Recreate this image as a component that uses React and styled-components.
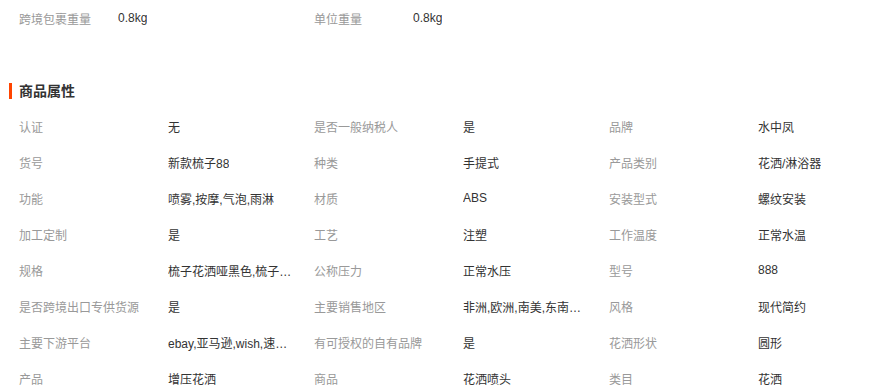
import React from "react";
import styled, { createGlobalStyle } from "styled-components";

const GlobalStyle = createGlobalStyle`
  body {
    margin: 0;
    background: #fff;
    font-family: "Liberation Sans", "Noto Sans CJK SC", sans-serif;
  }
`;

const weights = [
  { label: "跨境包裹重量", value: "0.8kg" },
  { label: "单位重量", value: "0.8kg" },
];

const attrs = [
  ["认证", "无"],
  ["是否一般纳税人", "是"],
  ["品牌", "水中凤"],
  ["货号", "新款梳子88"],
  ["种类", "手提式"],
  ["产品类别", "花洒/淋浴器"],
  ["功能", "喷雾,按摩,气泡,雨淋"],
  ["材质", "ABS"],
  ["安装型式", "螺纹安装"],
  ["加工定制", "是"],
  ["工艺", "注塑"],
  ["工作温度", "正常水温"],
  ["规格", "梳子花洒哑黑色,梳子花洒白色"],
  ["公称压力", "正常水压"],
  ["型号", "888"],
  ["是否跨境出口专供货源", "是"],
  ["主要销售地区", "非洲,欧洲,南美,东南亚,北美"],
  ["风格", "现代简约"],
  ["主要下游平台", "ebay,亚马逊,wish,速卖通"],
  ["有可授权的自有品牌", "是"],
  ["花洒形状", "圆形"],
  ["产品", "增压花洒"],
  ["商品", "花洒喷头"],
  ["类目", "花洒"],
];

const App = () => (
  <Page>
    <GlobalStyle />
    <TopRow>
      {weights.map(w => (
        <Cell key={w.label}>
          <Label narrow>{w.label}</Label>
          <Value>{w.value}</Value>
        </Cell>
      ))}
    </TopRow>
    <Title>商品属性</Title>
    <Grid>
      {attrs.map(([label, value]) => (
        <Cell key={label}>
          <Label>{label}</Label>
          <Value>{value}</Value>
        </Cell>
      ))}
    </Grid>
  </Page>
);

export default App;

const Page = styled.div`
  padding-left: 19px;
  font-size: 12px;
`;

const TopRow = styled.div`
  display: flex;
`;

const Grid = styled.div`
  display: grid;
  grid-template-columns: repeat(3, 295px);
  margin-top: 9px;
`;

const Cell = styled.div`
  display: flex;
  align-items: center;
  width: 295px;
  height: 36px;
`;

const Label = styled.span`
  flex: none;
  width: ${p => (p.narrow ? "99px" : "149px")};
  color: #999;
  white-space: nowrap;
`;

const Value = styled.span`
  max-width: 126px;
  color: #333;
  white-space: nowrap;
  overflow: hidden;
  text-overflow: ellipsis;
`;

const Title = styled.h3`
  margin: 47px 0 0 -10px;
  padding-left: 7px;
  border-left: 3px solid #ff4400;
  height: 16px;
  line-height: 16px;
  font-size: 14px;
  font-weight: bold;
  color: #333;
`;
